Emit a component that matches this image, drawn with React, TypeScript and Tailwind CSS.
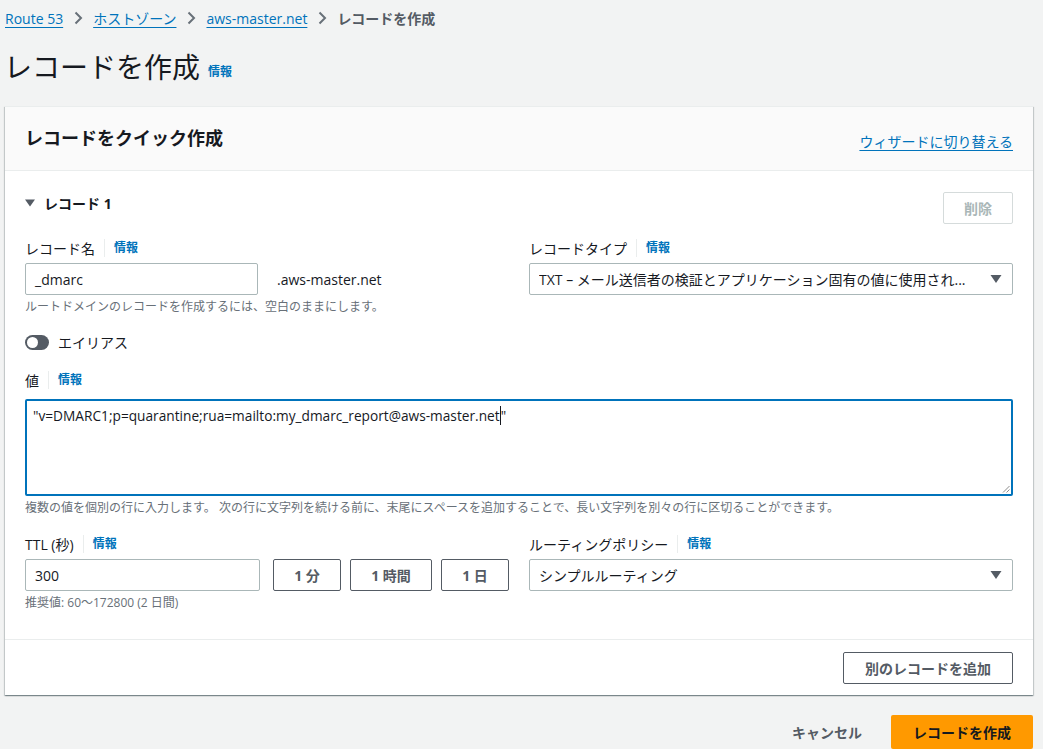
import type { ReactNode } from 'react';

const FONT = { fontFamily: '"Open Sans", "Noto Sans CJK JP", sans-serif' };

function Chevron() {
  return (
    <svg width="16" height="16" viewBox="0 0 16 16" className="mx-[7px] shrink-0">
      <path d="M5.5 2.5 11 8l-5.5 5.5" fill="none" stroke="#687078" strokeWidth="2" />
    </svg>
  );
}

function Label({ text }: { text: string }) {
  return (
    <div className="flex h-[22px] items-center text-[14px] text-[#16191f]">
      <span>{text}</span>
      <span className="ml-[9px] h-[18px] border-l border-[#eaeded] pl-[9px] text-[12px] font-bold text-[#0073bb]">
        情報
      </span>
    </div>
  );
}

function Caret() {
  return (
    <svg width="12" height="10" viewBox="0 0 12 10" className="shrink-0">
      <path d="M0.5 1h11L6 9z" fill="#545b64" />
    </svg>
  );
}

function Button({ children, className = '' }: { children: ReactNode; className?: string }) {
  return (
    <div
      className={`flex h-[32px] items-center justify-center rounded-[2px] border border-[#545b64] bg-white text-[14px] font-bold text-[#545b64] ${className}`}
    >
      {children}
    </div>
  );
}

export default function App() {
  return (
    <div className="min-h-[749px] overflow-hidden bg-[#f2f3f3] pl-[5px] pr-[10px]" style={FONT}>
      {/* breadcrumb */}
      <div className="flex h-[36px] items-center text-[14px]">
        <span className="text-[#0073bb] underline underline-offset-[3px]">Route 53</span>
        <Chevron />
        <span className="text-[#0073bb] underline underline-offset-[3px]">ホストゾーン</span>
        <Chevron />
        <span className="text-[#0073bb] underline underline-offset-[3px]">aws-master.net</span>
        <Chevron />
        <span className="font-bold text-[#545b64]">レコードを作成</span>
      </div>

      {/* title */}
      <div className="mt-[12px] flex h-[38px] items-center">
        <h1 className="ml-[-1px] text-[28px] font-normal leading-none text-[#16191f]">レコードを作成</h1>
        <span className="ml-[8px] mt-[10px] text-[12px] font-bold text-[#0073bb]">情報</span>
      </div>

      {/* card */}
      <div className="mt-[20px] border-t border-[#eaeded] bg-white shadow-[0_1px_1px_0_rgba(0,28,36,0.3),1px_1px_1px_0_rgba(0,28,36,0.15),-1px_1px_1px_0_rgba(0,28,36,0.15)]">
        <div className="flex h-[64px] items-center justify-between border-b border-[#eaeded] bg-[#fafafa] px-[20px]">
          <h2 className="text-[18px] font-bold text-[#16191f]">レコードをクイック作成</h2>
          <span className="mt-[6px] text-[14px] text-[#0073bb] underline underline-offset-[3px]">
            ウィザードに切り替える
          </span>
        </div>

        <div className="px-[20px] pb-[28px] pt-[21px]">
          <div className="flex h-[32px] items-start justify-between">
            <div className="mt-[1px] flex h-[20px] items-center text-[14px] font-bold text-[#16191f]">
              <svg width="10" height="8" viewBox="0 0 10 8" className="mr-[9px]">
                <path d="M0 0.5h10L5 7.5z" fill="#545b64" />
              </svg>
              レコード 1
            </div>
            <div className="flex h-[32px] w-[70px] items-center justify-center rounded-[2px] border border-[#d5dbdb] text-[14px] font-bold text-[#aab7b8]">
              削除
            </div>
          </div>

          <div className="mt-[13px] grid grid-cols-2 gap-x-[20px]">
            <div>
              <Label text="レコード名" />
              <div className="mt-[4px] flex items-center">
                <div className="flex h-[32px] w-[233px] items-center rounded-[2px] border border-[#aab7b8] px-[9px] text-[14px] text-[#16191f]">
                  _dmarc
                </div>
                <span className="ml-[19px] text-[14px] text-[#16191f]">.aws-master.net</span>
              </div>
              <div className="mt-[4px] h-[16px] text-[12px] leading-[16px] text-[#687078]">
                ルートドメインのレコードを作成するには、空白のままにします。
              </div>
            </div>
            <div>
              <Label text="レコードタイプ" />
              <div className="mt-[4px] flex h-[32px] items-center justify-between rounded-[2px] border border-[#aab7b8] pl-[9px] pr-[10px] text-[14px] text-[#16191f]">
                <span className="truncate">TXT – メール送信者の検証とアプリケーション固有の値に使用され...</span>
                <span className="ml-[20px]">
                  <Caret />
                </span>
              </div>
            </div>
          </div>

          {/* alias toggle */}
          <div className="mt-[17px] flex h-[20px] items-center">
            <div className="flex h-[15px] w-[24px] items-center rounded-full bg-[#545b64] pl-[2px]">
              <div className="h-[11px] w-[11px] rounded-full bg-white" />
            </div>
            <span className="ml-[9px] text-[14px] text-[#16191f]">エイリアス</span>
          </div>

          {/* value */}
          <div className="mt-[17px]">
            <Label text="値" />
            <div className="relative mt-[8px] h-[97px] rounded-[2px] border-2 border-[#0073bb] px-[6px] pt-[5px] text-[13.7px] text-[#16191f]">
              <span>"v=DMARC1;p=quarantine;rua=mailto:my_dmarc_report@aws-master.ne</span>
              <span className="border-r border-[#16191f]">t</span>
              <span>"</span>
              <svg width="8" height="8" viewBox="0 0 8 8" className="absolute bottom-[1px] right-[1px]">
                <path d="M7.5 1 1 7.5M7.5 4.5 4.5 7.5" stroke="#8c8c8c" strokeWidth="1" />
              </svg>
            </div>
            <div className="mt-[4px] h-[16px] text-[12px] leading-[16px] text-[#687078]">
              複数の値を個別の行に入力します。 次の行に文字列を続ける前に、末尾にスペースを追加することで、長い文字列を別々の行に区切ることができます。
            </div>
          </div>

          {/* ttl + routing */}
          <div className="mt-[17px] grid grid-cols-2 gap-x-[20px]">
            <div>
              <Label text="TTL (秒)" />
              <div className="mt-[4px] flex items-center gap-[9px]">
                <div className="flex h-[32px] w-[235px] items-center rounded-[2px] border border-[#aab7b8] px-[9px] text-[14px] text-[#16191f]">
                  300
                </div>
                <Button className="ml-[4px] w-[68px]">1 分</Button>
                <Button className="w-[82px]">1 時間</Button>
                <Button className="w-[68px]">1 日</Button>
              </div>
              <div className="mt-[4px] h-[16px] text-[12px] leading-[16px] text-[#687078]">
                推奨値: 60～172800 (2 日間)
              </div>
            </div>
            <div>
              <Label text="ルーティングポリシー" />
              <div className="mt-[4px] flex h-[32px] items-center justify-between rounded-[2px] border border-[#aab7b8] pl-[9px] pr-[10px] text-[14px] text-[#16191f]">
                <span>シンプルルーティング</span>
                <Caret />
              </div>
            </div>
          </div>
        </div>

        <div className="flex justify-end border-t border-[#eaeded] px-[20px] pb-[11px] pt-[12px]">
          <Button className="w-[170px]">別のレコードを追加</Button>
        </div>
      </div>

      {/* actions */}
      <div className="mt-[20px] flex items-center justify-end">
        <span className="mr-[29px] text-[14px] font-bold text-[#545b64]">キャンセル</span>
        <div className="flex h-[34px] w-[142px] items-center justify-center rounded-[2px] bg-[#ff9900] text-[14px] font-bold text-[#16191f]">
          レコードを作成
        </div>
      </div>
    </div>
  );
}
